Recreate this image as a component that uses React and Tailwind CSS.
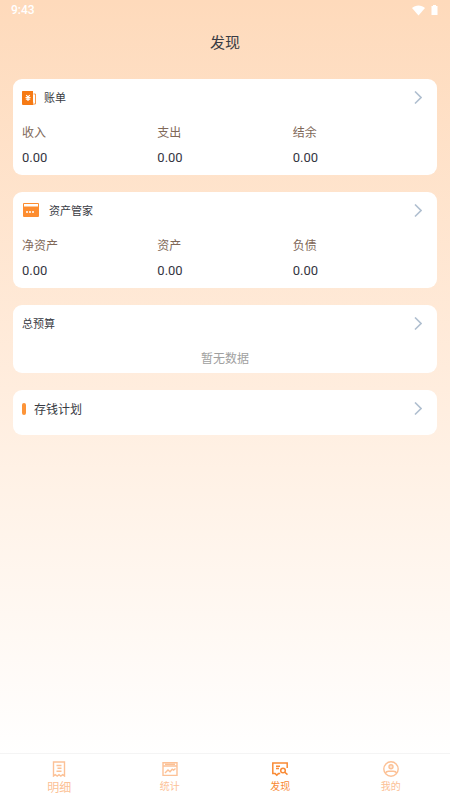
import React from 'react';

function Chevron() {
  return (
    <svg width="8" height="14" viewBox="0 0 8 14" fill="none" stroke="#b0bfd0" strokeWidth="1.6" aria-hidden="true">
      <path d="M1 .5l6 6-6 6" />
    </svg>
  );
}

function BillIcon() {
  return (
    <svg width="14" height="14" viewBox="0 0 14 14" aria-hidden="true">
      <path d="M.5 0H11v10.500l.6 3.500H1a1 1 0 0 1-1-1V.5z" fill="#f67a14" />
      <path d="M11.500 3h2v10h-1.500" fill="none" stroke="#f79a4c" strokeWidth="1" />
      <path d="M4.200 4.200L6 6l1.800-1.800M3.500 6.500h5M3.800 8.200h4.400M6 5.500v4.500" fill="none" stroke="#fff" strokeWidth="1.2" />
    </svg>
  );
}

function AssetIcon() {
  return (
    <svg width="17" height="16" viewBox="0 0 17 16" aria-hidden="true">
      <rect x="1" y="0" width="16" height="14" rx="1" fill="#fd8d30" />
      <rect x="2" y="1" width="14" height="2.5" fill="#fff" />
      <path d="M4 9h2M7 9h2M10 9h2" stroke="#fff" strokeWidth="1.6" />
    </svg>
  );
}

function CardHeader({ icon, title, titleClass }) {
  return (
    <button type="button" className="flex h-[37px] w-full items-center justify-between pr-[6px] text-left">
      <span className="flex items-center gap-2">
        {icon}
        <span className={titleClass}>{title}</span>
      </span>
      <Chevron />
    </button>
  );
}

function Card({ children, className }) {
  return <section className={`rounded-[9px] bg-white px-[9px] ${className}`}>{children}</section>;
}

function Stats({ items }) {
  return (
    <dl className="mt-[6px] grid grid-cols-3">
      {items.map(([label, value]) => (
        <div key={label} className="flex flex-col gap-[6px]">
          <dt className="text-[12px] leading-5 text-[#806858]">{label}</dt>
          <dd className="font-[Roboto] text-[13px] leading-5 text-[#34353f]">{value}</dd>
        </div>
      ))}
    </dl>
  );
}

function DetailIcon() {
  return (
    <svg width="16" height="16" viewBox="0 0 16 16" fill="none" stroke="currentColor" strokeWidth="1.4" aria-hidden="true">
      <path d="M2.500 15V1h11v14l-1.800-1.400L9.800 15 8 13.600 6.200 15l-1.900-1.400zM5.500 4.500h5M6.500 7.300h4M5.500 10.200h5" />
    </svg>
  );
}

function StatIcon() {
  return (
    <svg width="16" height="16" viewBox="0 0 16 16" fill="none" stroke="currentColor" strokeWidth="1.4" aria-hidden="true">
      <path d="M1 1.800h14v12.600H1zM1 5h14M3 3.400h10M3 12l3-3 2 1.700 2.200-2.500 1.400 1 1.900-1.700" />
    </svg>
  );
}

function FindIcon() {
  return (
    <svg width="16" height="16" viewBox="0 0 16 16" fill="none" stroke="currentColor" strokeWidth="1.5" aria-hidden="true">
      <path d="M15.200 7V2H.8v10.600h2.400l1.600 1.600 1.600-1.600h1.800M4 5.200h4M4 7.600h3" />
      <circle cx="11" cy="9.5" r="2.3" />
      <path d="M12.800 11.200l2.700 2.400" />
    </svg>
  );
}

function MineIcon() {
  return (
    <svg width="16" height="16" viewBox="0 0 16 16" fill="none" stroke="currentColor" strokeWidth="1.4" aria-hidden="true">
      <circle cx="8" cy="8" r="7.2" />
      <circle cx="8" cy="5.8" r="2" fill="currentColor" fillOpacity="0.4" />
      <path d="M2.400 12.200c.6-1.400 1.600-2 3.100-2h5c1.500 0 2.500.6 3.100 2" />
    </svg>
  );
}

const tabs = [
  { label: '明细', Icon: DetailIcon, text: 'text-[12px] leading-[18px]', tone: 'text-[#fcc196]' },
  { label: '统计', Icon: StatIcon, text: 'text-[10px] leading-4', tone: 'text-[#fcc196]' },
  { label: '发现', Icon: FindIcon, text: 'text-[10px] leading-4', tone: 'text-[#f98a35]', active: true },
  { label: '我的', Icon: MineIcon, text: 'text-[10px] leading-4', tone: 'text-[#fcc196]' },
];

export default function App() {
  return (
    <div className="flex min-h-screen flex-col bg-linear-to-b from-[#fedabb] to-white to-95% font-['Noto_Sans_CJK_SC',sans-serif] text-[#383b43]">
      <div className="flex h-5 items-center justify-between pr-3 pl-[11px] text-white">
        <span className="font-[Roboto] text-[12px] leading-5 font-medium">9:43</span>
        <span className="flex items-center gap-[6px]">
          <svg width="13" height="11" viewBox="0 0 13 11" fill="currentColor" aria-hidden="true">
            <path d="M0 3C3.500-.4 9.500-.4 13 3L6.500 10.500z" />
          </svg>
          <svg width="7" height="10" viewBox="0 0 7 10" fill="currentColor" aria-hidden="true">
            <path d="M2 0h3v1h1.500v9h-6V1H2z" />
          </svg>
        </span>
      </div>
      <h1 className="flex h-[43px] items-center justify-center text-[15px] leading-5">发现</h1>
      <main className="flex flex-1 flex-col gap-[17px] px-[13px] pt-4">
        <Card className="pb-[7px]">
          <CardHeader icon={<BillIcon />} title="账单" titleClass="text-[11px]" />
          <Stats items={[['收入', '0.00'], ['支出', '0.00'], ['结余', '0.00']]} />
        </Card>
        <Card className="pb-[7px]">
          <CardHeader icon={<AssetIcon />} title="资产管家" titleClass="pl-[2px] text-[11px]" />
          <Stats items={[['净资产', '0.00'], ['资产', '0.00'], ['负债', '0.00']]} />
        </Card>
        <Card className="pb-[5px]">
          <CardHeader title="总预算" titleClass="text-[11px]" />
          <p className="mt-[6px] text-center text-[12px] leading-5 text-[#a0a0a0]">暂无数据</p>
        </Card>
        <Card className="pb-2">
          <CardHeader
            icon={<span className="h-3 w-1 rounded-[2px] bg-[#fd9438]" />}
            title="存钱计划"
            titleClass="text-[12px]"
          />
        </Card>
      </main>
      <nav className="flex h-[47px] border-t border-[#f4f4f4] bg-white px-1">
        {tabs.map(({ label, Icon, text, tone, active }) => (
          <button
            key={label}
            type="button"
            aria-current={active ? 'page' : undefined}
            className={`flex flex-1 flex-col items-center gap-[1px] pt-[7px] ${tone}`}
          >
            <Icon />
            <span className={text}>{label}</span>
          </button>
        ))}
      </nav>
    </div>
  );
}
